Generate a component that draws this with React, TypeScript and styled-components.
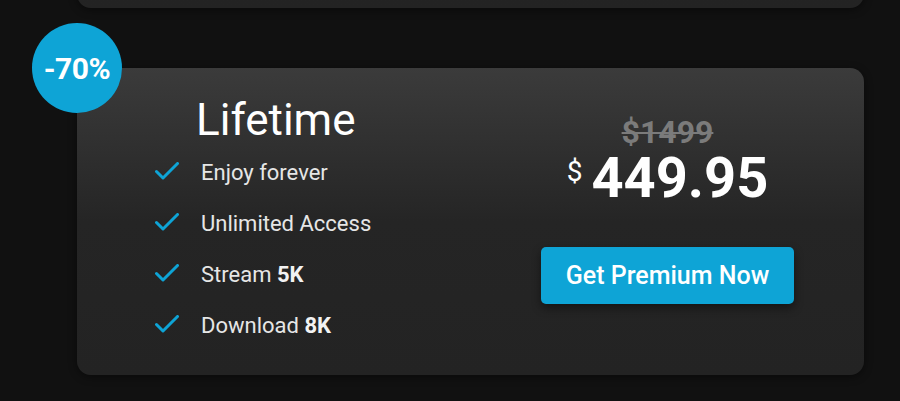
import styled, { createGlobalStyle } from 'styled-components';

const GlobalStyle = createGlobalStyle`
    html, body {
        margin: 0;
        padding: 0;
        background: #111111;
    }
    body {
        font-family: Roboto, 'Liberation Sans', sans-serif;
        color: #ffffff;
        overflow: hidden;
    }
`;

const ACCENT = '#0ea4d6';

const Page = styled.div`
    display: flex;
    flex-direction: column;
    gap: 60px;
    width: 787px;
    margin-left: 77px;
    height: 401px;
`;

const PlanCard = styled.div<{ $clipped?: boolean }>`
    position: relative;
    display: grid;
    grid-template-columns: 394px 1fr;
    border-radius: 14px;
    background: linear-gradient(180deg, #3b3b3b 0%, #252525 50%, #232323 100%);
    box-shadow: 0 2px 8px rgba(0, 0, 0, 0.45);
    ${({ $clipped }) =>
        $clipped &&
        `
        height: 200px;
        margin-top: -192px;
        flex-shrink: 0;
    `}
`;

const DiscountBadge = styled.div`
    position: absolute;
    left: -45px;
    top: -45px;
    width: 90px;
    height: 90px;
    border-radius: 50%;
    background: ${ACCENT};
    display: flex;
    align-items: center;
    justify-content: center;
    font-size: 30px;
    font-weight: 700;
    letter-spacing: -0.5px;
`;

const PlanInfo = styled.div`
    display: flex;
    flex-direction: column;
    padding: 30px 0 37px 78px;
`;

const PlanTitle = styled.h2`
    margin: 0 0 19px 41px;
    font-size: 44px;
    line-height: 44px;
    font-weight: 400;
`;

const FeatureList = styled.ul`
    list-style: none;
    margin: 0;
    padding: 0;
    display: flex;
    flex-direction: column;
    gap: 27px;
`;

const FeatureRow = styled.li`
    display: flex;
    align-items: center;
    gap: 22px;
    font-size: 22px;
    line-height: 24px;
    color: #e6e6e6;

    b {
        font-weight: 700;
        color: #f2f2f2;
    }
`;

const CheckIcon = styled.svg`
    width: 24px;
    height: 18px;
    flex-shrink: 0;
    margin-top: -5px;
`;

const PriceColumn = styled.div`
    display: flex;
    flex-direction: column;
    align-items: center;
    padding-top: 47px;
`;

const OldPrice = styled.div`
    font-size: 32px;
    line-height: 30px;
    font-weight: 700;
    color: #7b7b7b;
    text-decoration: line-through;
    text-decoration-thickness: 2px;
    margin-top: 2px;
    margin-bottom: 3px;
`;

const PriceRow = styled.div`
    display: flex;
    align-items: flex-start;
    gap: 9px;
`;

const Currency = styled.span`
    font-size: 28px;
    line-height: 28px;
    margin-top: 8px;
`;

const Amount = styled.span`
    font-size: 56px;
    line-height: 56px;
    font-weight: 700;
`;

const PremiumButton = styled.button`
    margin-top: 41px;
    height: 57px;
    width: 253px;
    border: none;
    border-radius: 5px;
    background: ${ACCENT};
    color: #ffffff;
    font-family: inherit;
    font-size: 25px;
    font-weight: 500;
    box-shadow: 0 4px 10px rgba(0, 0, 0, 0.45);
    cursor: pointer;
`;

const Check = () => (
    <CheckIcon viewBox="0 0 24 18" fill="none">
        <polyline
            points="1.5,9.5 8,16 22.5,1.5"
            stroke={ACCENT}
            strokeWidth={3}
            strokeLinecap="round"
            strokeLinejoin="round"
        />
    </CheckIcon>
);

const features: { label: string; strong?: string }[] = [
    { label: 'Enjoy forever' },
    { label: 'Unlimited Access' },
    { label: 'Stream', strong: '5K' },
    { label: 'Download', strong: '8K' },
];

export default function App() {
    return (
        <>
            <GlobalStyle />
            <Page>
                <PlanCard $clipped />
                <PlanCard>
                    <DiscountBadge>-70%</DiscountBadge>
                    <PlanInfo>
                        <PlanTitle>Lifetime</PlanTitle>
                        <FeatureList>
                            {features.map((f) => (
                                <FeatureRow key={f.label}>
                                    <Check />
                                    <span>
                                        {f.label}
                                        {f.strong && (
                                            <>
                                                {' '}
                                                <b>{f.strong}</b>
                                            </>
                                        )}
                                    </span>
                                </FeatureRow>
                            ))}
                        </FeatureList>
                    </PlanInfo>
                    <PriceColumn>
                        <OldPrice>$1499</OldPrice>
                        <PriceRow>
                            <Currency>$</Currency>
                            <Amount>449.95</Amount>
                        </PriceRow>
                        <PremiumButton>Get Premium Now</PremiumButton>
                    </PriceColumn>
                </PlanCard>
            </Page>
        </>
    );
}
